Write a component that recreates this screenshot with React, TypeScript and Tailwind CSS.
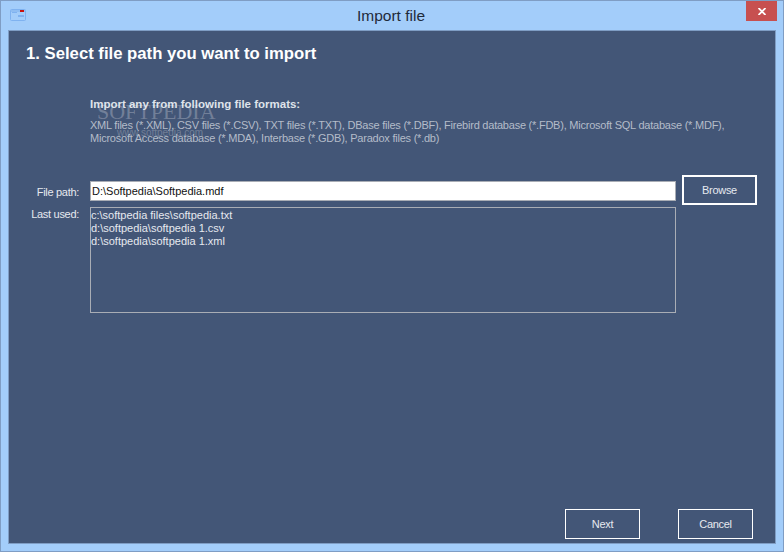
export default function App() {
  const font = { fontFamily: '"Liberation Sans", Arial, sans-serif' };
  return (
    <div
      className="w-[784px] h-[552px] flex flex-col bg-[#a3cdfa] border border-[#7f9dc4] overflow-hidden"
      style={font}
    >
      {/* Title bar */}
      <div className="h-[29px] shrink-0 flex items-start relative">
        <div className="pl-[9px] pt-[8px]">
          <svg width="17" height="13" viewBox="0 0 17 13">
            <rect x="0.5" y="0.5" width="15" height="11" rx="1" fill="#a3cdfa" stroke="#7fb2f0" />
            <rect x="1" y="1" width="14" height="2" fill="#8fbdf2" />
            <rect x="10" y="1" width="4" height="2" fill="#c8100c" />
            <rect x="2" y="3" width="5" height="1" fill="#7fb2f0" />
            <rect x="8" y="6" width="6" height="2" fill="#7fb2f0" />
          </svg>
        </div>
        <div className="absolute inset-x-0 top-[6px] pr-[2px] text-center text-[15.5px] leading-[18px] text-[#1f2a3a]">
          Import file
        </div>
        <div className="absolute right-[6px] top-0 w-[31px] h-[20px] bg-[#c75050] flex items-center justify-center">
          <svg width="8" height="7" viewBox="0 0 8 7">
            <path d="M0.5 0 L7.5 7 M7.5 0 L0.5 7" stroke="#fff" strokeWidth="1.8" />
          </svg>
        </div>
      </div>

      {/* Content */}
      <div className="relative mx-[7px] h-[514px] shrink-0 bg-[#435677] border border-[#7f9dc4] flex flex-col">
        <h1 className="pl-[17px] pt-[13px] text-[16.7px] leading-[20px] font-bold text-white">
          1. Select file path you want to import
        </h1>

        <div className="pl-[81px] pt-[33px]">
          <p className="text-[11.5px] leading-[14px] font-bold text-[#dfe3ea]">
            Import any from following file formats:
          </p>
          <p className="mt-[8px] w-[650px] text-[11px] leading-[13px] tracking-[-0.23px] text-[#b4bcc9]">
            XML files (*.XML), CSV files (*.CSV), TXT files (*.TXT), DBase files (*.DBF), Firebird database (*.FDB), Microsoft SQL database (*.MDF),
            Microsoft Access database (*.MDA), Interbase (*.GDB), Paradox files (*.db)
          </p>
        </div>

        {/* Watermark */}
        <div className="absolute left-[88px] top-[69px] font-['Liberation_Serif',serif] text-[22px] leading-[24px] text-white/25 pointer-events-none">
          SOFTPEDIA
        </div>
        <div className="absolute left-[108px] top-[96px] text-[10px] leading-[12px] text-white/25 pointer-events-none">
          www.softpedia.com
        </div>

        <div className="mt-[30px] flex items-start">
          <div className="w-[70px] pt-[10px] text-right text-[11px] leading-[14px] tracking-[-0.3px] text-[#e6e9ef]">File path:</div>
          <div className="ml-[11px] mt-[6px] w-[586px] h-[20px] bg-white border border-[#a9adb5] pl-[1px] text-[11px] leading-[18px] text-[#111]">
            D:\Softpedia\Softpedia.mdf
          </div>
          <button className="ml-[6px] w-[75px] h-[30px] border-[2px] border-white text-[11px] tracking-[-0.3px] text-[#e6e9ef]">Browse</button>
        </div>

        <div className="mt-[2px] flex items-start">
          <div className="w-[70px] text-right text-[11px] leading-[14px] tracking-[-0.3px] text-[#e6e9ef]">Last used:</div>
          <div className="ml-[11px] w-[586px] h-[106px] border border-[#a9adb5] pt-[1px] text-[11px] leading-[13px] text-[#e6e9ef]">
            <div>c:\softpedia files\softpedia.txt</div>
            <div>d:\softpedia\softpedia 1.csv</div>
            <div>d:\softpedia\softpedia 1.xml</div>
          </div>
        </div>

        <div className="mt-auto mb-[4px] flex justify-end gap-[38px] pr-[22px]">
          <button className="w-[75px] h-[30px] border border-white text-[11px] tracking-[-0.3px] text-[#e6e9ef]">Next</button>
          <button className="w-[75px] h-[30px] border border-white text-[11px] tracking-[-0.3px] text-[#e6e9ef]">Cancel</button>
        </div>
      </div>
    </div>
  );
}
